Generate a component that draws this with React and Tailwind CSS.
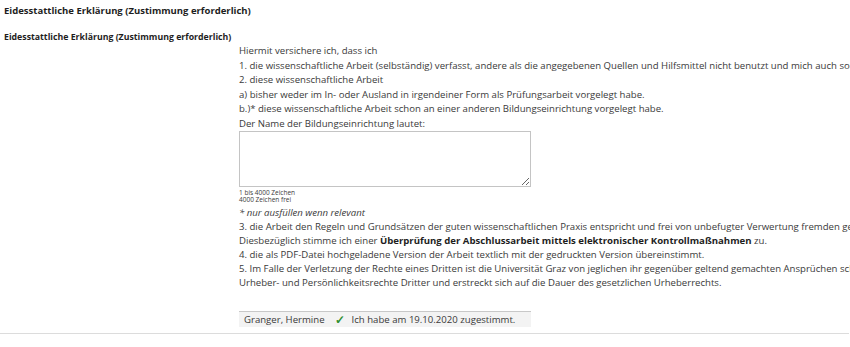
export default function App() {
  return (
    <div className="w-[850px] h-[347px] overflow-hidden bg-white text-[#3a3a3a] font-['Open_Sans',sans-serif]">
      <div className="pl-[4px] pt-[3px] text-[9.5px] font-bold leading-[16px] text-[#1e1e1e]">
        Eidesstattliche Erklärung (Zustimmung erforderlich)
      </div>
      <div className="flex mt-[11px]">
        <div className="w-[239px] shrink-0 pl-[4px] text-[8.75px] font-bold leading-[14px] text-[#1e1e1e] whitespace-nowrap">
          Eidesstattliche Erklärung (Zustimmung erforderlich)
        </div>
        <div className="flex-1 min-w-0 whitespace-nowrap text-[9.6px] leading-[14.5px] pt-[14px]">
          <div>Hiermit versichere ich, dass ich</div>
          <div>1. die wissenschaftliche Arbeit (selbständig) verfasst, andere als die angegebenen Quellen und Hilfsmittel nicht benutzt und mich auch sonst keiner unerlaubten Hilfsmittel bedient habe,</div>
          <div>2. diese wissenschaftliche Arbeit</div>
          <div>a) bisher weder im In- oder Ausland in irgendeiner Form als Prüfungsarbeit vorgelegt habe.</div>
          <div>b.)* diese wissenschaftliche Arbeit schon an einer anderen Bildungseinrichtung vorgelegt habe.</div>
          <div>Der Name der Bildungseinrichtung lautet:</div>
          <textarea className="block w-[292px] h-[56px] mt-0 border border-[#c4c4c4] resize-y" />
          <div className="text-[6.5px] leading-[7px] mt-[1.5px]">1 bis 4000 Zeichen</div>
          <div className="text-[6.5px] leading-[7px]">4000 Zeichen frei</div>
          <div className="italic mt-[2.3px] leading-[15px]">* nur ausfüllen wenn relevant</div>
          <div className="leading-[14px]">
            <div>3. die Arbeit den Regeln und Grundsätzen der guten wissenschaftlichen Praxis entspricht und frei von unbefugter Verwertung fremden geistigen Eigentums ist.</div>
            <div>Diesbezüglich stimme ich einer <b className="text-[#1e1e1e]">Überprüfung der Abschlussarbeit mittels elektronischer Kontrollmaßnahmen</b> zu.</div>
            <div>4. die als PDF-Datei hochgeladene Version der Arbeit textlich mit der gedruckten Version übereinstimmt.</div>
            <div>5. Im Falle der Verletzung der Rechte eines Dritten ist die Universität Graz von jeglichen ihr gegenüber geltend gemachten Ansprüchen schad- und klaglos zu halten. Dies betrifft insbesondere</div>
            <div>Urheber- und Persönlichkeitsrechte Dritter und erstreckt sich auf die Dauer des gesetzlichen Urheberrechts.</div>
          </div>
          <div className="mt-[21.5px] w-[292px] h-[16px] bg-[#f3f3f3] border-t border-[#c8c8c8] flex items-center pl-[5px] text-[9.6px]">
            <span>Granger, Hermine</span>
            <span className="ml-[10px] text-[#2f8f2f] text-[12px] leading-none font-bold">✓</span>
            <span className="ml-[7px]">Ich habe am 19.10.2020 zugestimmt.</span>
          </div>
        </div>
      </div>
      <div className="mt-[6px] h-px bg-[#dcdcdc] w-[849px]" />
    </div>
  );
}
